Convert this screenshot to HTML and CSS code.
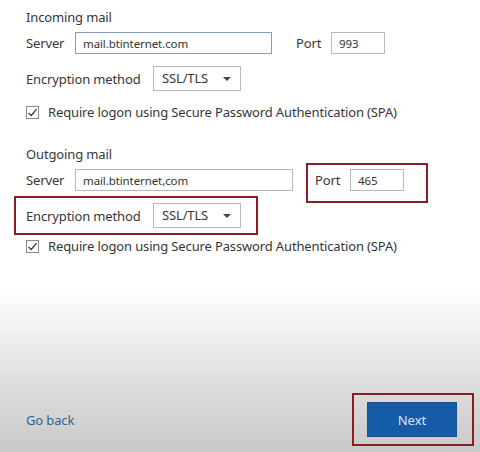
FILE: index.html
```html
<!DOCTYPE html>
<html lang="en">
  <head>
    <meta charset="UTF-8" />
    <title>Mail settings</title>
    <link rel="stylesheet" href="styles.css">
  </head>
  <body>
    <div class="form">
      <div class="group">
        <div class="heading">Incoming mail</div>
        <div class="row">
          <span class="label server-label">Server</span>
          <input class="field server focused" value="mail.btinternet.com" />
          <span class="label port-label">Port</span>
          <input class="field port" value="993" />
        </div>
        <div class="row enc">
          <span class="label enc-label">Encryption method</span>
          <div class="select">SSL/TLS<span class="arrow"></span></div>
        </div>
        <label class="check">
          <span class="box"><svg viewBox="0 0 13 13" width="13" height="13"><path d="M2.5 6.8 L5.2 9.5 L10.6 3.2" fill="none" stroke="#333" stroke-width="1.2"/></svg></span>
          Require logon using Secure Password Authentication (SPA)
        </label>
      </div>

      <div class="group outgoing">
        <div class="heading">Outgoing mail</div>
        <div class="row">
          <span class="label server-label">Server</span>
          <input class="field server wide" value="mail.btinternet,com" />
          <div class="mark port-mark">
            <span class="label port-label">Port</span>
            <input class="field port" value="465" />
          </div>
        </div>
        <div class="mark enc-mark">
          <span class="label enc-label">Encryption method</span>
          <div class="select">SSL/TLS<span class="arrow"></span></div>
        </div>
        <label class="check">
          <span class="box"><svg viewBox="0 0 13 13" width="13" height="13"><path d="M2.5 6.8 L5.2 9.5 L10.6 3.2" fill="none" stroke="#333" stroke-width="1.2"/></svg></span>
          Require logon using Secure Password Authentication (SPA)
        </label>
      </div>
    </div>

    <div class="footer">
      <a class="back" href="#">Go back</a>
      <div class="mark next-mark">
        <button class="next">Next</button>
      </div>
    </div>
  </body>
</html>
```

FILE: styles.css
```css
:root {
  --text: #363636;
  --mark: #8c1d25;
  --field-border: #b9b9b9;
  --blue: #155ba7;
}
* {
  box-sizing: border-box;
}
html,
body {
  margin: 0;
  padding: 0;
}
body {
  width: 480px;
  height: 452px;
  display: flex;
  flex-direction: column;
  font-family: "Noto Sans", "Open Sans", sans-serif;
  font-size: 13px;
  letter-spacing: -0.14px;
  color: var(--text);
  background: linear-gradient(#ffffff 0, #ffffff 286px, #dedede 385px, #c9c9c9 452px);
  overflow: hidden;
}
.form {
  padding: 8px 0 0 26px;
}
.heading {
  height: 18px;
  line-height: 18px;
}
.row {
  display: flex;
  align-items: center;
  height: 22px;
  margin-top: 6px;
}
.label {
  line-height: 18px;
  white-space: nowrap;
}
.server-label {
  width: 49px;
}
.port-label {
  width: 35px;
}
.enc-label {
  width: 127px;
}
.field {
  height: 22px;
  border: 1px solid var(--field-border);
  padding: 0 7px;
  font-family: inherit;
  font-size: 11.5px;
  letter-spacing: -0.1px;
  color: #333;
  background: #fff;
  outline: none;
}
.server {
  width: 197px;
  margin-right: 24px;
}
.server.focused {
  border-color: #7f9fc0;
}
.server.wide {
  width: 218px;
  margin-right: 13px;
}
.port {
  width: 54px;
}
.enc {
  height: 25px;
  margin-top: 12px;
}
.select {
  position: relative;
  width: 88px;
  height: 25px;
  line-height: 23px;
  border: 1px solid var(--field-border);
  background: #fff;
  padding-left: 8px;
  font-size: 13px;
}
.arrow {
  position: absolute;
  right: 9px;
  top: 10px;
  border-left: 4px solid transparent;
  border-right: 4px solid transparent;
  border-top: 4px solid #444;
}
.check {
  display: flex;
  align-items: center;
  height: 18px;
  margin-top: 12px;
  white-space: nowrap;
}
.box {
  width: 13px;
  height: 13px;
  border: 1px solid #8a8a8a;
  margin-right: 9px;
  display: flex;
  align-items: center;
  justify-content: center;
  background: #fff;
}
.box svg {
  display: block;
  flex: none;
}
.outgoing {
  margin-top: 24px;
}
.outgoing .row {
  align-items: flex-start;
  height: 23px;
}
.outgoing .row .label {
  margin-top: 2px;
}
.mark {
  border: 2px solid var(--mark);
}
.port-mark {
  display: flex;
  align-items: flex-start;
  margin-top: -6px;
  width: 122px;
  height: 40px;
  padding: 4px 0 0 7px;
}
.port-mark .label {
  margin-top: 2px;
}
.enc-mark {
  display: flex;
  align-items: center;
  width: 244px;
  height: 39px;
  margin: 4px 0 0 -12px;
  padding-left: 10px;
}
.enc-mark + .check {
  margin-top: 2px;
}
.footer {
  margin-top: auto;
  display: flex;
  align-items: center;
  justify-content: space-between;
  padding: 0 6px 6px 26px;
}
.back {
  color: #2d6496;
  text-decoration: none;
  font-size: 13px;
}
.next-mark {
  width: 122px;
  height: 53px;
  padding: 7px 0 0 13px;
}
.next {
  width: 90px;
  height: 35px;
  border: none;
  background: var(--blue);
  color: #dfe8f2;
  font-family: inherit;
  font-size: 13px;
  box-shadow: 0 0 0 1px #1b4f8c inset;
}
```
